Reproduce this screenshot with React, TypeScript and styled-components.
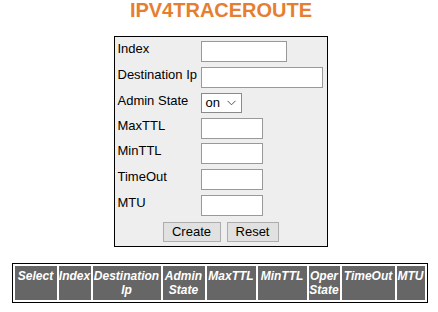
import React from "react";
import styled, { createGlobalStyle } from "styled-components";

const Global = createGlobalStyle`
  html, body { margin: 0; padding: 0; background: #ffffff; }
  body { font-family: "Liberation Sans", Arial, sans-serif; width: 438px; }
`;

const Page = styled.div`
  display: flex;
  flex-direction: column;
  align-items: center;
`;

const Title = styled.h1`
  margin: 0;
  font-size: 20px;
  line-height: 20px;
  font-weight: bold;
  color: #e67e30;
  padding-left: 4px;
`;

const FormWrap = styled.div`
  margin-top: 16px;
  padding-left: 3px;
`;

const FormBox = styled.div`
  border: 1px solid #000;
  background: #efeeee;
  padding: 4px 3px 4px 3px;
  display: grid;
  grid-template-columns: 83px 1fr;
  grid-template-rows: 26px 26px 25px 25px 26px 26px 27px auto;
  box-sizing: content-box;
  width: 206px;
`;

const Label = styled.div`
  font-size: 13px;
  line-height: 15px;
  color: #000;
  white-space: nowrap;
`;

const Field = styled.div`
  display: flex;
  align-items: flex-start;
`;

const TextInput = styled.input<{ $w: number }>`
  box-sizing: border-box;
  width: ${(p) => p.$w}px;
  height: 21px;
  border: 1px solid #999;
  background: #fff;
  margin: 0;
  padding: 0 2px;
  outline: none;
`;

const SelectBox = styled.div`
  position: relative;
  box-sizing: border-box;
  width: 41px;
  height: 20px;
  border: 1px solid #8a8a8a;
  background: #fff;
  font-size: 13px;
  line-height: 18px;
  padding-left: 4px;
`;

const Chevron = styled.svg`
  position: absolute;
  right: 5px;
  top: 6px;
`;

const ButtonRow = styled.div`
  grid-column: 1 / span 2;
  display: flex;
  justify-content: center;
  gap: 6px;
`;

const Btn = styled.button<{ $w: number }>`
  box-sizing: border-box;
  width: ${(p) => p.$w}px;
  height: 20px;
  border: 1px solid #adadad;
  background: #e1e1e1;
  font-family: "Liberation Sans", Arial, sans-serif;
  font-size: 13px;
  line-height: 18px;
  color: #000;
  padding: 0;
`;

const Table = styled.div`
  margin-top: 16px;
  box-sizing: border-box;
  width: 416px;
  border: 1px solid #000;
  padding: 2px;
  display: grid;
  grid-template-columns: 42px 32px 68px 42px 49px 49px 31px 53px 28px;
  column-gap: 2px;
  margin-left: 1px;
`;

const HeadCell = styled.div`
  background: #666666;
  color: #fff;
  font-size: 12px;
  line-height: 14px;
  font-weight: bold;
  font-style: italic;
  text-align: center;
  padding: 3px 0;
  min-height: 28px;
`;

const fields: { label: string; w?: number; select?: boolean }[] = [
  { label: "Index", w: 86 },
  { label: "Destination Ip", w: 122 },
  { label: "Admin State", select: true },
  { label: "MaxTTL", w: 62 },
  { label: "MinTTL", w: 62 },
  { label: "TimeOut", w: 62 },
  { label: "MTU", w: 62 },
];

const headers = [
  "Select",
  "Index",
  "Destination Ip",
  "Admin State",
  "MaxTTL",
  "MinTTL",
  "Oper State",
  "TimeOut",
  "MTU",
];

export default function App() {
  return (
    <>
      <Global />
      <Page>
        <Title>IPV4TRACEROUTE</Title>
        <FormWrap>
          <FormBox>
            {fields.map((f) => (
              <React.Fragment key={f.label}>
                <Label>{f.label}</Label>
                <Field>
                  {f.select ? (
                    <SelectBox>
                      on
                      <Chevron width="9" height="6" viewBox="0 0 9 6">
                        <path d="M0.5 0.8 L4.5 4.8 L8.5 0.8" fill="none" stroke="#555" strokeWidth="1" />
                      </Chevron>
                    </SelectBox>
                  ) : (
                    <TextInput $w={f.w!} />
                  )}
                </Field>
              </React.Fragment>
            ))}
            <ButtonRow>
              <Btn $w={58}>Create</Btn>
              <Btn $w={52}>Reset</Btn>
            </ButtonRow>
          </FormBox>
        </FormWrap>
        <Table>
          {headers.map((h) => (
            <HeadCell key={h}>{h}</HeadCell>
          ))}
        </Table>
      </Page>
    </>
  );
}
